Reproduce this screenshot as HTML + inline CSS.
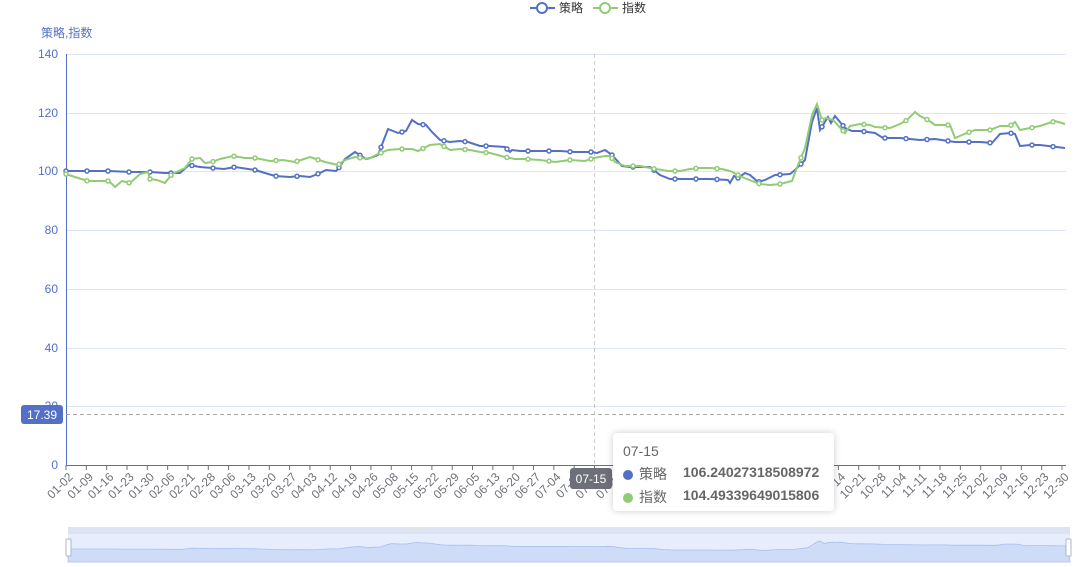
<!DOCTYPE html>
<html><head><meta charset="utf-8"><style>
body{margin:0;width:1088px;height:567px;background:#fff;overflow:hidden;font-family:"Liberation Sans","Noto Sans CJK SC",sans-serif;position:relative}
.tt{position:absolute;left:613px;top:433px;width:221px;height:78px;background:#fff;border-radius:4px;box-shadow:0 0 8px rgba(0,0,0,.2);font-size:14px;color:#666}
.tt div{position:absolute;left:10px;white-space:nowrap}
.tt b{position:absolute;left:60px;color:#666;font-weight:bold;font-size:14px}
.dot{display:inline-block;width:10px;height:10px;border-radius:5px;margin-right:6px;vertical-align:-1px}
</style></head><body>
<svg id="s" width="1088" height="567" style="position:absolute;left:0;top:0" font-family="Liberation Sans, Noto Sans CJK SC, sans-serif">
<g stroke="#e0e6f1" stroke-width="1">
<line x1="66" x2="1066" y1="54.5" y2="54.5"/><line x1="66" x2="1066" y1="113.5" y2="113.5"/><line x1="66" x2="1066" y1="171.5" y2="171.5"/><line x1="66" x2="1066" y1="230.5" y2="230.5"/><line x1="66" x2="1066" y1="289.5" y2="289.5"/><line x1="66" x2="1066" y1="348.5" y2="348.5"/><line x1="66" x2="1066" y1="406.5" y2="406.5"/>
</g>
<line x1="66.5" x2="66.5" y1="54" y2="465" stroke="#5470c6"/>
<line x1="66" x2="1066" y1="465.5" y2="465.5" stroke="#6e7079"/>
<g fill="#5470c6" font-size="12" text-anchor="end">
<text x="58" y="58">140</text><text x="58" y="117">120</text><text x="58" y="175">100</text><text x="58" y="234">80</text><text x="58" y="293">60</text><text x="58" y="352">40</text><text x="58" y="410">20</text><text x="58" y="469">0</text>
</g>
<text x="41" y="37" fill="#5470c6" font-size="12">策略,指数</text>
<line x1="594.5" x2="594.5" y1="54" y2="465" stroke="#ccc" stroke-dasharray="4,3"/>
<line x1="66" x2="1066" y1="414.5" y2="414.5" stroke="#aaa" stroke-dasharray="4,3"/>
<g id="xl" fill="#6e7079" font-size="12"></g>
<g id="lines"></g>
<!-- legend -->
<g stroke-width="2" fill="#fff">
<line x1="530" x2="555" y1="8" y2="8" stroke="#5470c6"/><circle cx="542" cy="8" r="5" stroke="#5470c6"/>
<line x1="593" x2="618" y1="8" y2="8" stroke="#91cc75"/><circle cx="605" cy="8" r="5" stroke="#91cc75"/>
</g>
<text x="559" y="12" font-size="12" fill="#333">策略</text>
<text x="622" y="12" font-size="12" fill="#333">指数</text>
<!-- datazoom -->
<rect x="68" y="527" width="1002" height="35" fill="#e6edfd"/>
<rect x="68" y="527" width="1002" height="7" fill="#dde3f1"/>
<path id="dz" fill="#cfdcf8" stroke="#a9bff0" stroke-width="0.8"/>
<rect x="66" y="539" width="5" height="17" rx="1" fill="#fff" stroke="#aab6d0"/>
<rect x="1066" y="539" width="5" height="17" rx="1" fill="#fff" stroke="#aab6d0"/>
<!-- axis pointer labels -->
<rect x="21" y="405" width="42" height="19" rx="3" fill="#5470c6"/>
<text x="42" y="419" fill="#fff" font-size="12" text-anchor="middle">17.39</text>
<rect x="570" y="468" width="42" height="21" rx="3" fill="#6e7079"/>
<text x="591" y="483" fill="#fff" font-size="12" text-anchor="middle">07-15</text>
</svg>
<div class="tt">
<div style="top:10px">07-15</div>
<div style="top:31px"><span class="dot" style="background:#5470c6"></span>策略<b>106.24027318508972</b></div>
<div style="top:54px"><span class="dot" style="background:#91cc75"></span>指数<b>104.49339649015806</b></div>
</div>
<script>
var B=[[66,171],[88,171],[109,171],[130,172],[150,172],[165,173],[180,173],[189,165],[200,167],[212,168],[224,169],[235,167],[255,170],[265,173],[275,176],[290,177],[300,176],[310,177],[320,173],[326,170],[336,171],[338,169],[345,159],[355,152],[366,159],[370,158],[378,155],[388,129],[398,133],[406,131],[412,120],[418,124],[426,125],[432,132],[440,140],[450,142],[460,141],[468,142],[480,146],[490,146],[505,147],[510,152],[512,150],[520,151],[540,151],[560,151],[575,152],[592,152],[597,153],[605,150],[612,155],[622,166],[630,167],[640,167],[650,167],[660,175],[670,179],[690,179],[710,179],[728,180],[730,183],[734,176],[738,178],[745,173],[750,175],[758,182],[765,180],[775,175],[790,174],[795,170],[805,160],[812,122],[817,108],[820,130],[828,117],[831,123],[835,116],[845,128],[852,131],[860,131],[875,133],[883,138],[900,138],[920,140],[935,139],[955,142],[980,142],[992,143],[1000,134],[1010,133],[1015,134],[1020,146],[1030,145],[1040,145],[1065,148]];
var G=[[66,174],[75,177],[88,181],[100,181],[109,181],[115,187],[122,181],[130,183],[140,174],[148,172],[150,179],[157,180],[165,183],[172,174],[185,168],[192,159],[200,158],[205,163],[212,162],[220,159],[233,156],[245,158],[255,158],[270,161],[283,160],[295,162],[310,157],[325,162],[338,165],[345,160],[355,157],[368,159],[378,154],[388,150],[400,149],[412,149],[418,151],[430,145],[440,144],[450,150],[460,149],[470,150],[480,152],[490,153],[505,157],[515,159],[525,159],[540,160],[555,162],[570,160],[585,161],[594,158],[605,156],[610,156],[615,162],[625,166],[640,166],[650,168],[668,171],[680,171],[690,169],[700,168],[710,168],[722,169],[730,171],[742,177],[752,181],[760,184],[770,185],[780,184],[792,181],[796,170],[805,148],[812,115],[817,104],[822,120],[826,118],[833,120],[845,133],[850,126],[860,124],[870,125],[875,127],[890,128],[900,124],[907,120],[915,112],[920,116],[928,120],[935,125],[950,125],[955,138],[962,135],[975,130],[990,130],[1000,126],[1010,126],[1015,122],[1020,130],[1030,128],[1040,126],[1055,121],[1065,124]];
function yAt(P,x){for(var i=1;i<P.length;i++){if(P[i][0]>=x){var a=P[i-1],b=P[i];return a[1]+(b[1]-a[1])*(x-a[0])/(b[0]-a[0]||1);}}return P[P.length-1][1];}
var h='';
[[B,'#5470c6'],[G,'#91cc75']].forEach(function(s){
 h+='<polyline fill="none" stroke-width="2" stroke="'+s[1]+'" points="'+s[0].map(function(p){return p.join(',')}).join(' ')+'"/>';
 for(var x=66;x<=1062;x+=21){h+='<circle cx="'+x+'" cy="'+yAt(s[0],x).toFixed(1)+'" r="2" fill="#fff" stroke="'+s[1]+'" stroke-width="1.5"/>';}
});
document.getElementById('lines').innerHTML=h;
var L="01-02 01-09 01-16 01-23 01-30 02-06 02-21 02-28 03-06 03-13 03-20 03-27 04-03 04-12 04-19 04-26 05-08 05-15 05-22 05-29 06-05 06-13 06-20 06-27 07-04 07-11 07-18 07-25 08-01 08-08 08-15 08-22 08-29 09-05 09-12 09-19 09-26 10-10 10-14 10-21 10-28 11-04 11-11 11-18 11-25 12-02 12-09 12-16 12-23 12-30".split(' ');
var xl='',st=(1062-66)/(L.length-1);
L.forEach(function(t,i){var x=66+i*st;xl+='<line x1="'+x+'" x2="'+x+'" y1="465" y2="470" stroke="#6e7079"/><text transform="translate('+(x+2)+',472) rotate(-45)" text-anchor="end" dy="8">'+t+'</text>';});
document.getElementById('xl').innerHTML=xl;
var d='M68,562 ';
for(var x=68;x<=1070;x+=4){var yy=yAt(B,66+(x-68)*1000/1002);d+='L'+x+','+(549+(yy-171)*0.13).toFixed(1)+' ';}
d+='L1070,562 Z';document.getElementById('dz').setAttribute('d',d);
</script>
</body></html>
